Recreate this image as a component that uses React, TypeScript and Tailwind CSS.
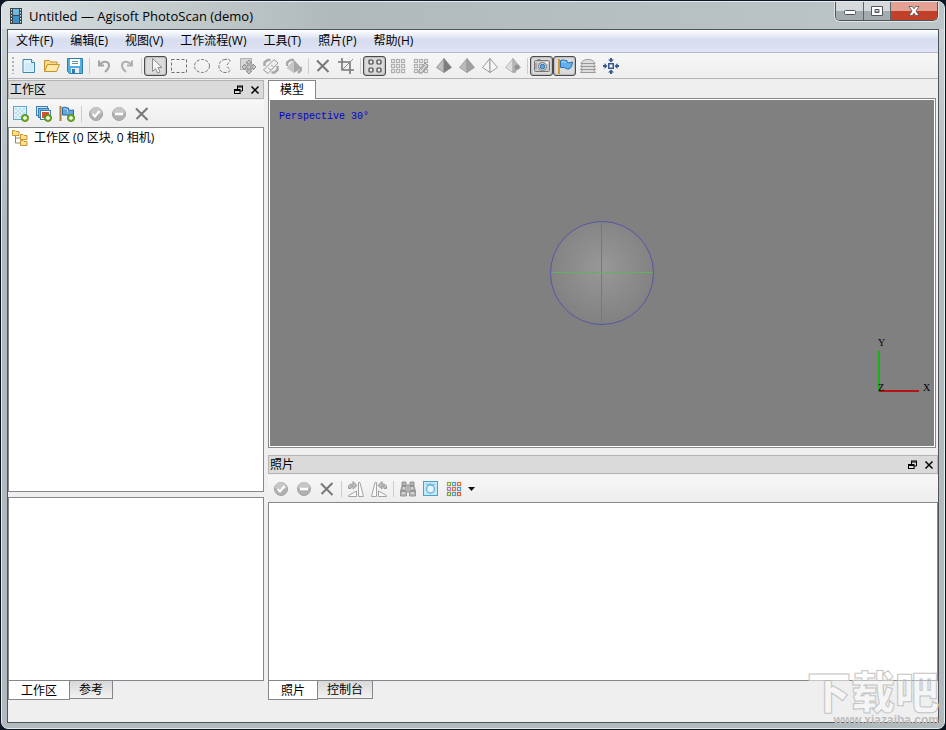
import type { ReactNode } from "react";

const uiFont = "font-['Open_Sans','Noto_Sans_CJK_SC',sans-serif]";

function Svg({ children, size = 16 }: { children: ReactNode; size?: number }) {
  return (
    <svg width={size} height={size} viewBox={`0 0 ${size} ${size}`} fill="none" aria-hidden="true">
      {children}
    </svg>
  );
}

function ToolButton({ label, pressed, children }: { label: string; pressed?: boolean; children: ReactNode }) {
  return (
    <button
      type="button"
      aria-label={label}
      title={label}
      aria-pressed={pressed}
      className={
        pressed
          ? "flex h-5 w-[23px] shrink-0 items-center justify-center rounded-[3px] border border-[#4a4a4a] bg-[#dcdcdc] shadow-[inset_0_0_2px_#777]"
          : "flex h-5 w-[23px] shrink-0 items-center justify-center"
      }
    >
      {children}
    </button>
  );
}

function Separator() {
  return (
    <div className="flex w-1.5 shrink-0 justify-center">
      <div className="h-4 w-px bg-[#cdcdcd]" />
    </div>
  );
}

/* ---------- icons ---------- */

const FilmIcon = () => (
  <Svg>
    <rect x="2" y="0" width="12" height="16" fill="#3b454c" />
    <rect x="5" y="1" width="6" height="6" fill="#6fb8e2" />
    <rect x="5" y="8" width="6" height="7" fill="#3d8fc6" />
    <path d="M3.500 1v14M12.500 1v14" stroke="#dfe6ea" strokeDasharray="1.5 1.5" />
  </Svg>
);
const NewIcon = () => (
  <Svg>
    <path d="M2 1.500h8.500l3 3v10H2z" fill="#e3f4fd" stroke="#3a86b3" />
    <path d="M10.500 1.500v3h3" fill="#fff" stroke="#3a86b3" />
    <path d="M4 6h8M4 8h8M4 10h8M4 12h8" stroke="#b9e0f4" />
  </Svg>
);
const OpenIcon = () => (
  <Svg>
    <path d="M.5 13.500v-11h5l1.500 1.500h6v2.500" fill="#f9d98b" stroke="#c8912c" />
    <path d="M.5 13.500l3-7h12l-3 7z" fill="#fee9a6" stroke="#c8912c" />
  </Svg>
);
const SaveIcon = () => (
  <Svg>
    <path d="M.5 .5h15v15h-13l-2-2z" fill="#55aee0" stroke="#2d7cb0" />
    <rect x="3" y="1" width="10" height="7" fill="#fff" />
    <path d="M5 3.500h6M5 5.500h6" stroke="#6c8a9c" />
    <rect x="4" y="10" width="8" height="5" fill="#e6eef3" />
    <rect x="5" y="11" width="3" height="4" fill="#3a7ba5" />
  </Svg>
);
const UndoIcon = () => (
  <Svg>
    <path d="M3 2.500v5h5" stroke="#a3a3a3" strokeWidth="2" />
    <path d="M3.500 7C7 2 13 3 13 7.500c0 3-1.500 4.500-4 6.500" stroke="#a3a3a3" strokeWidth="2" />
  </Svg>
);
const RedoIcon = () => (
  <Svg>
    <path d="M13 2.500v5H8" stroke="#b0b0b0" strokeWidth="2" />
    <path d="M12.500 7C9 2 3 3 3 7.500c0 3 1.500 4.500 4 6.500" stroke="#b0b0b0" strokeWidth="2" />
  </Svg>
);
const CursorIcon = () => (
  <Svg>
    <path d="M4.500 .5v13l3-2.800 2 4.300 2.500-1-2-4.500h4z" fill="#f6f6f6" stroke="#8b8b8b" />
  </Svg>
);
const RectSelectIcon = () => (
  <Svg>
    <rect x=".5" y="1.500" width="15" height="13" stroke="#6e6e6e" strokeDasharray="3 2" />
  </Svg>
);
const EllipseSelectIcon = () => (
  <Svg>
    <ellipse cx="8" cy="8" rx="7.500" ry="6.500" stroke="#777" strokeDasharray="3 1.500" />
  </Svg>
);
const LassoIcon = () => (
  <Svg>
    <path d="M8 1.500C3.500 2 2 5 2 8.500S4 14.500 8 14.500c3.500 0 5-1 5-2.500S10 10 10 7.500s3-2.500 3-4.500-2-2-5-1.500z" stroke="#777" strokeDasharray="3 1.500" />
  </Svg>
);
const MoveIcon = () => (
  <Svg>
    <rect x=".5" y=".5" width="11" height="11" fill="#d7d7d7" stroke="#b0b0b0" />
    <path d="M9 2l3 3h-2v3h3V6l3 3-3 3v-2h-3v3h2l-3 3-3-3h2v-3H5v2L2 9l3-3v2h3V5H6z" fill="#c8c8c8" stroke="#8e8e8e" />
  </Svg>
);
const RotateRegionIcon = () => (
  <Svg>
    <path d="M1.500 8V4.500l3-2.500h3M14.500 8v4l-3 2.500h-3" stroke="#a8a8a8" strokeWidth="2.500" />
    <path d="M.5 12L11 1.500l4 3.500L5 15.500z" fill="#eee" stroke="#999" />
    <path d="M5 10l3 2M8 7l3 2" stroke="#b0b0b0" />
  </Svg>
);
const RotateObjectIcon = () => (
  <Svg>
    <path d="M1 8V4.500L4.500 2H8M12 15l3-3V9" stroke="#a8a8a8" strokeWidth="2.500" />
    <path d="M8 2l7.500 8L8 15z" fill="#a6a6a6" />
    <path d="M8 2L.5 10 8 15z" fill="#c6c6c6" />
  </Svg>
);
const CrossIcon = () => (
  <Svg>
    <path d="M2 2.500L13.500 14M13.500 2L2.500 13" stroke="#777" strokeWidth="2" />
  </Svg>
);
const CropIcon = () => (
  <Svg>
    <path d="M4 0v12h12M0 4h12v12" stroke="#777" strokeWidth="1.600" />
    <path d="M4 12L15 1" stroke="#888" />
  </Svg>
);
const PointsIcon = () => (
  <Svg>
    {[4, 12].map((y) =>
      [4, 12].map((x) => <rect key={`${x}-${y}`} x={x - 2} y={y - 2} width="4" height="4" rx="1" fill="#e8e8e8" stroke="#444" strokeWidth="1.200" />)
    )}
  </Svg>
);
const GridDots = ({ colors, children }: { colors: string[]; children?: ReactNode }) => (
  <Svg>
    {[0, 1, 2].map((r) =>
      [0, 1, 2].map((c) => (
        <rect key={`${r}-${c}`} x={1.5 + c * 5} y={1.5 + r * 5} width="3" height="3" fill="#f6f6f6" stroke={colors[(r * 3 + c) % colors.length]} strokeWidth="1.200" />
      ))
    )}
    {children}
  </Svg>
);
const Pyramid = ({ left, right, line = "#999" }: { left: string; right: string; line?: string }) => (
  <Svg>
    <path d="M8 .5L.5 9.500 8 14.500z" fill={left} stroke={line} strokeWidth=".8" />
    <path d="M8 .5l7.500 9L8 14.500z" fill={right} stroke={line} strokeWidth=".8" />
  </Svg>
);
const CameraIcon = () => (
  <Svg size={18}>
    <rect x="1.500" y="3.500" width="15" height="11" rx="1" fill="#c9c9c9" stroke="#777" />
    <path d="M3 6v6M4.500 2.500h3" stroke="#888" />
    <rect x="12" y="5" width="3" height="2" fill="#f6f6f6" />
    <circle cx="9.500" cy="9.500" r="4" fill="#dcecf8" stroke="#777" />
    <circle cx="9.500" cy="9.500" r="2.300" fill="#5fa4dc" stroke="#326fa8" />
  </Svg>
);
const FlagIcon = () => (
  <Svg>
    <path d="M2 1v15" stroke="#d79531" strokeWidth="2" />
    <path d="M3.500 2.500c3-1.500 4.500 .5 6.500 0v2c2 .5 3.500 0 5.500-.5-.5 3-1 6-3.500 7-3 .5-3.500-1.500-5-1.500H3.500z" fill="#63b0ec" stroke="#286fb4" />
    <path d="M4.500 4c2-1 4 .5 5 .5" stroke="#b8dff9" />
  </Svg>
);
const LayersIcon = () => (
  <Svg>
    <path d="M.5 14.500l3-4h9l3 4z" fill="#dedede" stroke="#999" />
    <path d="M.5 11.500l3-4h9l3 4z" fill="#dedede" stroke="#999" />
    <path d="M.5 8.500l3-4h9l3 4z" fill="#dedede" stroke="#999" />
    <path d="M1 5.500C3 0 13 0 15 5.500z" fill="#dedede" stroke="#999" />
  </Svg>
);
const ResetViewIcon = () => (
  <Svg>
    <rect x="5.750" y="5.750" width="4.500" height="4.500" fill="#fff" stroke="#35588f" strokeWidth="1.500" />
    <path d="M5 1.500h2V0h2v1.500h2L8 4.500zM5 14.500h2V16h2v-1.500h2L8 11.500zM1.500 5v2H0v2h1.500v2l3-3zM14.500 5v2H16v2h-1.500v2l-3-3z" fill="#35588f" />
  </Svg>
);
const PlusBadge = () => (
  <>
    <circle cx="12" cy="12" r="3.500" fill="#75b528" stroke="#4f8717" />
    <path d="M12 10v4M10 12h4" stroke="#fff" strokeWidth="1.300" />
  </>
);
const AddChunkIcon = () => (
  <Svg>
    <rect x=".5" y=".5" width="13" height="13" fill="#dff1fb" stroke="#5ba6d2" />
    <path d="M2 3h10M2 7h10M4 5h8M4 9h8M2 11h8" stroke="#b4d8ec" strokeWidth="1.500" strokeDasharray="2 2" />
    <PlusBadge />
  </Svg>
);
const AddPhotosIcon = () => (
  <Svg>
    <rect x=".5" y=".5" width="11" height="9" fill="#cbe6f8" stroke="#3b7fb5" />
    <rect x="2.500" y="2.500" width="10" height="9" fill="#7db4dc" stroke="#3b7fb5" />
    <rect x="4.500" y="4.500" width="10" height="9" fill="#fff" stroke="#3b7fb5" />
    <rect x="6" y="6" width="7" height="6" fill="#d9512f" />
    <PlusBadge />
  </Svg>
);
const AddMarkerIcon = () => (
  <Svg>
    <path d="M1.500 0v15" stroke="#a97f45" strokeWidth="2" />
    <path d="M3.500 1.500c3-1 4 .5 6 .5v2c2 .5 4 0 5 0v6h-5L8 9H3.500z" fill="#60a4d9" stroke="#2d699f" />
    <path d="M4.500 3c2-.5 3 .5 4 .5v3" stroke="#b4dcf5" />
    <PlusBadge />
  </Svg>
);
const RoundIcon = ({ minus }: { minus?: boolean }) => (
  <Svg>
    <circle cx="8" cy="8" r="6.500" fill="#b0b0b0" stroke="#a2a2a2" />
    <path d="M2 7a6 6 0 0 1 12 0c-4 2-8 2-12 0z" fill="#c6c6c6" />
    {minus ? <path d="M4 8h8" stroke="#fff" strokeWidth="2.500" /> : <path d="M4.500 8L7 10.500 11.500 5" stroke="#fff" strokeWidth="2" />}
  </Svg>
);
const FolderTreeIcon = () => (
  <Svg>
    <path d="M3.500 6v7H9M3.500 8H9" stroke="#9b8554" />
    {[[0.5, 0.5], [8.5, 4.5], [8.5, 10.5]].map(([x, y]) => (
      <path key={y} d={`M${x} ${y}h2.500l1 1H${x + 6.5}v4H${x}z`} fill="#fce08c" stroke="#c79433" />
    ))}
  </Svg>
);
const RotateShapes = () => (
  <>
    <path d="M.5 15.500v-1l8-4.500v5.500z" fill="#f8f8f8" stroke="#a4a4a4" />
    <path d="M10.500 15.500V1.500h1.500l3.500 14z" fill="#f8f8f8" stroke="#a4a4a4" />
    <path d="M.5 7.500V5l2-2H5V.5l4 4-4 3.500V5.500H3.500l-.5 2z" fill="#bbb" stroke="#8f8f8f" strokeWidth=".8" />
  </>
);
const RotateRightIcon = () => (
  <Svg>
    <RotateShapes />
  </Svg>
);
const RotateLeftIcon = () => (
  <Svg>
    <g transform="matrix(-1 0 0 1 16 0)">
      <RotateShapes />
    </g>
  </Svg>
);
const BinocularsIcon = () => (
  <Svg>
    <path d="M2 1h4v3h4V1h4v4l1.500 5v5h-6v-4h-3v4h-6v-5L2 5z" fill="#b5b5b5" stroke="#888" strokeWidth=".8" />
    <path d="M2 5h4M10 5h4M1 10h5M10 10h5" stroke="#777" />
    <path d="M2 12h3M11 12h3M3 7h2M11 7h2" stroke="#dedede" strokeWidth="1.500" />
  </Svg>
);
const MaskIcon = () => (
  <Svg>
    <rect x=".5" y=".5" width="14" height="14" fill="#c5e8fa" stroke="#4aa1d3" />
    <circle cx="7.500" cy="8" r="4" fill="#e8f6fd" stroke="#6db5dd" strokeWidth="1.500" />
    <path d="M3 3l2 1M12 3l-2 1M5 4c1-1.500 4-1.500 5 0" stroke="#6db5dd" />
  </Svg>
);
const FloatIcon = () => (
  <Svg size={10}>
    <path d="M3 1h6M3.500 1v3M3 2h6M8.500 1v5H6" stroke="#000" />
    <path d="M0 4.500h6M.5 4v5M0 8.500h6.500M6 4v5M0 5.500h6" stroke="#000" />
  </Svg>
);
const CloseIcon = () => (
  <Svg size={10}>
    <path d="M1.500 1.500l7 7M8.500 1.500l-7 7" stroke="#000" strokeWidth="1.500" />
  </Svg>
);

/* ---------- panels ---------- */

function DockTitle({ children }: { children: ReactNode }) {
  return (
    <header className="flex h-[19px] shrink-0 items-center justify-between border border-[#b4b4b4] bg-[#dadada] pr-[3px] pl-px text-xs leading-4">
      <h2>{children}</h2>
      <div className="flex gap-1.5">
        <button type="button" aria-label="浮动"><FloatIcon /></button>
        <button type="button" aria-label="关闭"><CloseIcon /></button>
      </div>
    </header>
  );
}

function BottomTabs({ tabs }: { tabs: [string, string] }) {
  return (
    <div role="tablist" className="flex h-[19px] shrink-0 items-start text-xs leading-4">
      <button type="button" role="tab" aria-selected="true" className="h-[19px] border border-t-0 border-[#85878c] bg-white px-3 pt-0.5">
        {tabs[0]}
      </button>
      <button type="button" role="tab" aria-selected="false" className="h-[18px] border border-t-0 border-l-0 border-[#85878c] bg-linear-to-b from-[#d8d8d8] to-[#f2f2f2] px-[9px]">
        {tabs[1]}
      </button>
    </div>
  );
}

const gray9 = ["#b0b0b0"];
const menus = ["文件(F)", "编辑(E)", "视图(V)", "工作流程(W)", "工具(T)", "照片(P)", "帮助(H)"];

function TitleBar() {
  return (
    <header className="flex h-[27px] shrink-0 items-start justify-between bg-linear-to-r from-[#d9dfe0] via-[#b0b9bc] via-35% to-[#bcc5c8] pl-1.5">
      <div className="flex h-full items-center gap-[5px]">
        <FilmIcon />
        <h1 className="text-[13px] leading-5 text-black">Untitled — Agisoft PhotoScan (demo)</h1>
      </div>
      <div className="mr-1.5 flex h-[19px] overflow-hidden rounded-b-[5px] border border-t-0 border-[#4e5559] shadow-[0_0_0_1px_#dfe5e7]">
        <button type="button" aria-label="最小化" className="flex w-7 items-center justify-center border-r border-[#5c6468] bg-linear-to-b from-[#d5d9db] from-50% to-[#a3abaf] to-50%">
          <svg width="12" height="12" viewBox="0 0 12 12" aria-hidden="true"><rect x=".5" y="5.500" width="11" height="4" rx="1" fill="#fff" stroke="#50565c" /></svg>
        </button>
        <button type="button" aria-label="最大化" className="flex w-[27px] items-center justify-center border-r border-[#5c6468] bg-linear-to-b from-[#d5d9db] from-50% to-[#a3abaf] to-50%">
          <svg width="12" height="12" viewBox="0 0 12 12" aria-hidden="true"><path fillRule="evenodd" d="M.5 1.500h11v9H.5zM4 4.500v3h4v-3z" fill="#fff" stroke="#50565c" /></svg>
        </button>
        <button type="button" aria-label="关闭窗口" className="flex w-[46px] items-center justify-center bg-linear-to-b from-[#e3a193] from-50% to-[#c0402a] to-50%">
          <svg width="12" height="12" viewBox="0 0 12 12" aria-hidden="true"><path d="M1 1.500h3.300L6 3.800l1.700-2.300H11L8 6l3 4.500H7.700L6 8.200l-1.700 2.300H1L4 6z" fill="#fff" stroke="#5a4a50" strokeWidth=".8" /></svg>
        </button>
      </div>
    </header>
  );
}

function MainToolbar() {
  return (
    <div role="toolbar" aria-label="主工具栏" className="flex h-[26px] shrink-0 items-center overflow-hidden border-b border-[#b4b4b4] bg-linear-to-b from-[#f6f6f6] to-[#eeeeee] pl-1">
      <div className="mr-[3px] h-[17px] w-0.5 bg-[repeating-linear-gradient(to_bottom,#b5b5b5_0_2px,transparent_2px_4px)]" />
      <ToolButton label="新建"><NewIcon /></ToolButton>
      <ToolButton label="打开"><OpenIcon /></ToolButton>
      <ToolButton label="保存"><SaveIcon /></ToolButton>
      <Separator />
      <ToolButton label="撤消"><UndoIcon /></ToolButton>
      <ToolButton label="重做"><RedoIcon /></ToolButton>
      <Separator />
      <ToolButton label="导航" pressed><CursorIcon /></ToolButton>
      <ToolButton label="矩形选择"><RectSelectIcon /></ToolButton>
      <ToolButton label="圆形选择"><EllipseSelectIcon /></ToolButton>
      <ToolButton label="自由选择"><LassoIcon /></ToolButton>
      <ToolButton label="移动区域"><MoveIcon /></ToolButton>
      <ToolButton label="旋转区域"><RotateRegionIcon /></ToolButton>
      <ToolButton label="旋转对象"><RotateObjectIcon /></ToolButton>
      <Separator />
      <ToolButton label="删除选择"><CrossIcon /></ToolButton>
      <ToolButton label="裁剪选择"><CropIcon /></ToolButton>
      <Separator />
      <ToolButton label="点云" pressed><PointsIcon /></ToolButton>
      <ToolButton label="密集点云"><GridDots colors={gray9} /></ToolButton>
      <ToolButton label="密集点云类别">
        <GridDots colors={gray9}><path d="M6 12l6-7 3 3-6 7H6z" fill="#ddd" stroke="#8c8c8c" /><path d="M8 12l4-5M9.500 13.500l4-5" stroke="#999" /></GridDots>
      </ToolButton>
      <ToolButton label="着色"><Pyramid left="#bdbdbd" right="#7c7c7c" line="#8a8a8a" /></ToolButton>
      <ToolButton label="实体"><Pyramid left="#bababa" right="#a0a0a0" /></ToolButton>
      <ToolButton label="线框"><Pyramid left="#f5f5f5" right="#f5f5f5" line="#888" /></ToolButton>
      <ToolButton label="纹理">
        <Svg>
          <path d="M8 .5L.5 9.500 8 14.500z" fill="#dedede" stroke="#aaa" strokeWidth=".8" />
          <path d="M8 .5l7.500 9L8 14.500z" fill="#b8b8b8" stroke="#aaa" strokeWidth=".8" />
          <circle cx="12" cy="9" r="2.500" fill="#919191" /><circle cx="9.500" cy="13" r="2" fill="#aaa" />
        </Svg>
      </ToolButton>
      <Separator />
      <ToolButton label="显示相机" pressed><CameraIcon /></ToolButton>
      <ToolButton label="显示标记" pressed><FlagIcon /></ToolButton>
      <ToolButton label="显示图层"><LayersIcon /></ToolButton>
      <ToolButton label="重置视图"><ResetViewIcon /></ToolButton>
    </div>
  );
}

function WorkspaceDock() {
  return (
    <aside className="flex w-64 shrink-0 flex-col">
      <DockTitle>工作区</DockTitle>
      <div role="toolbar" aria-label="工作区工具栏" className="mt-px flex h-[27px] shrink-0 items-center bg-linear-to-b from-[#f7f7f7] to-[#ededed] pl-px">
        <ToolButton label="添加区块"><AddChunkIcon /></ToolButton>
        <ToolButton label="添加照片"><AddPhotosIcon /></ToolButton>
        <ToolButton label="添加标记"><AddMarkerIcon /></ToolButton>
        <Separator />
        <ToolButton label="启用"><RoundIcon /></ToolButton>
        <ToolButton label="禁用"><RoundIcon minus /></ToolButton>
        <ToolButton label="移除"><CrossIcon /></ToolButton>
      </div>
      <ul role="tree" aria-label="工作区" className="min-h-0 flex-1 border border-[#85878c] bg-white pt-0.5 pl-[3px]">
        <li role="treeitem" className="flex items-center gap-1.5 text-xs leading-4">
          <FolderTreeIcon />
          工作区 (0 区块, 0 相机)
        </li>
      </ul>
      <div className="mt-[5px] h-[184px] shrink-0 border border-[#85878c] bg-white" />
      <BottomTabs tabs={["工作区", "参考"]} />
    </aside>
  );
}

function ModelView() {
  return (
    <section className="flex min-h-0 flex-1 flex-col pr-0.5">
      <div role="tablist" className="z-10 -mb-px flex h-[19px] shrink-0">
        <button type="button" role="tab" aria-selected="true" className="border border-b-0 border-[#85878c] bg-white px-[11px] text-xs leading-4">
          模型
        </button>
      </div>
      <div className="flex min-h-0 flex-1 border border-[#85878c] bg-white p-px">
        <div className="relative flex flex-1 items-center justify-center bg-[#808080]">
          <p className="absolute top-[11px] left-[9px] font-['Liberation_Mono',monospace] text-[10px] leading-3 text-[#0000d8]">Perspective 30°</p>
          <svg width="106" height="106" viewBox="0 0 106 106" fill="none" role="img" aria-label="轨迹球">
            <defs>
              <radialGradient id="ball" cx="50%" cy="45%" r="52%">
                <stop offset="0" stopColor="#989898" />
                <stop offset="1" stopColor="#828282" />
              </radialGradient>
            </defs>
            <circle cx="53" cy="53" r="51.500" fill="url(#ball)" stroke="#5656a6" />
            <rect x="52" y="2" width="1" height="102" fill="#b85c5c" />
            <rect x="2" y="52" width="102" height="1" fill="#62b062" />
          </svg>
          <svg className="absolute right-0 bottom-[50px] font-['Liberation_Serif',serif] text-[10px]" width="60" height="62" viewBox="0 0 60 62" role="img" aria-label="坐标轴">
            <path d="M5 17v40" stroke="#14b414" strokeWidth="2" />
            <path d="M5 57h40" stroke="#b41414" strokeWidth="2" />
            <text x="4" y="12">Y</text>
            <text x="4" y="57">Z</text>
            <text x="49" y="57">X</text>
          </svg>
        </div>
      </div>
    </section>
  );
}

function PhotosDock() {
  return (
    <section className="mt-[7px] flex shrink-0 flex-col">
      <DockTitle>照片</DockTitle>
      <div role="toolbar" aria-label="照片工具栏" className="mt-px flex h-[27px] shrink-0 items-center bg-linear-to-b from-[#f7f7f7] to-[#ededed] pl-px">
        <ToolButton label="启用"><RoundIcon /></ToolButton>
        <ToolButton label="禁用"><RoundIcon minus /></ToolButton>
        <ToolButton label="移除"><CrossIcon /></ToolButton>
        <Separator />
        <ToolButton label="向右旋转"><RotateRightIcon /></ToolButton>
        <ToolButton label="向左旋转"><RotateLeftIcon /></ToolButton>
        <Separator />
        <ToolButton label="筛选"><BinocularsIcon /></ToolButton>
        <ToolButton label="显示蒙版"><MaskIcon /></ToolButton>
        <ToolButton label="图标大小">
          <GridDots colors={["#8fae28", "#4f9fd6", "#e0703c", "#a477c4", "#e0703c", "#4f9fd6", "#7ba428", "#4f9fd6", "#d8603c"]} />
        </ToolButton>
        <button type="button" aria-label="视图选项" className="flex w-3 justify-center">
          <svg width="7" height="4" viewBox="0 0 7 4" aria-hidden="true"><path d="M0 0h7L3.500 4z" fill="#111" /></svg>
        </button>
      </div>
      <div className="h-[179px] shrink-0 border border-[#85878c] bg-white" />
      <BottomTabs tabs={["照片", "控制台"]} />
    </section>
  );
}

export default function App() {
  return (
    <div className={`h-screen w-full bg-[#0d1622] p-px text-black ${uiFont}`}>
      <div className="relative flex h-full flex-col overflow-hidden rounded-[7px] border border-[#e4ebed] bg-linear-to-b from-[#ccd3d5] to-[#b1babd] to-30%">
        <TitleBar />
        <main className="mx-[5px] mb-[5px] flex min-h-0 flex-1 flex-col border border-[#4e5559] bg-[#efefef]">
          <nav className="flex h-[23px] shrink-0 gap-px border-b border-[#b3b8cc] bg-linear-to-b from-white via-[#d6ddef] via-45% to-[#e0e4f4]">
            {menus.map((m) => (
              <button key={m} type="button" className="px-2 text-xs leading-4">
                {m}
              </button>
            ))}
          </nav>
          <MainToolbar />
          <div className="mt-px flex min-h-0 flex-1 gap-1 pb-[22px]">
            <WorkspaceDock />
            <div className="flex min-w-0 flex-1 flex-col">
              <ModelView />
              <PhotosDock />
            </div>
          </div>
        </main>
        <div aria-hidden="true" className="pointer-events-none absolute right-[5px] bottom-0 flex flex-col items-end">
          <p className="font-['Noto_Sans_CJK_SC',sans-serif] text-[44px] leading-[44px] font-black text-white/40 [-webkit-text-stroke:1px_#c4c4c4]">下载吧</p>
          <p className="font-['Liberation_Sans',sans-serif] text-xs leading-4 font-bold text-[#bdbdbd]">www.xiazaiba.com</p>
        </div>
      </div>
    </div>
  );
}
